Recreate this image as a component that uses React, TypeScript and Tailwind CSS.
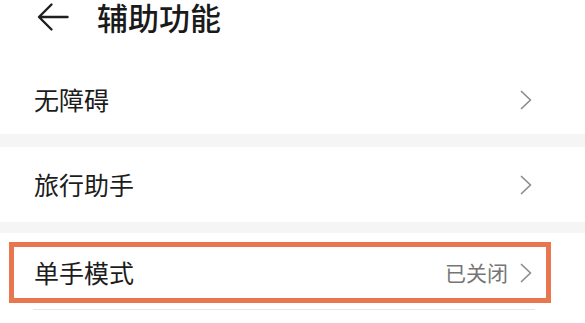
import React from 'react';

const font = { fontFamily: '"Noto Sans CJK SC", "Noto Sans", sans-serif' };

function Chevron() {
  return (
    <svg width="12" height="20" viewBox="0 0 12 20" fill="none" className="shrink-0">
      <path d="M1.5 1.5 L10.5 10 L1.5 18.5" stroke="#8c8c8c" strokeWidth="1.7" strokeLinecap="round" strokeLinejoin="round" />
    </svg>
  );
}

function BackArrow() {
  return (
    <svg width="32" height="30" viewBox="0 0 32 30" fill="none">
      <path d="M30.5 15 H2.5 M14.5 2.5 L2 15 L14.5 27.5" stroke="#1f1f1f" strokeWidth="2.4" strokeLinecap="round" strokeLinejoin="round" />
    </svg>
  );
}

function Row({ label, value, height }: { label: string; value?: string; height: string }) {
  return (
    <div className={`flex items-center justify-between pl-[34px] pr-[53px] ${height}`}>
      <span className="text-[25px] leading-none text-[#1c1c1c]">{label}</span>
      <div className="flex items-center gap-[12px]">
        {value && <span className="text-[21px] leading-none text-[#757575]">{value}</span>}
        <Chevron />
      </div>
    </div>
  );
}

export default function App() {
  return (
    <div className="w-[585px] h-[323px] overflow-hidden bg-white" style={font}>
      {/* Header */}
      <div className="flex items-start h-[65px] pt-[2px] pl-[37px]">
        <BackArrow />
        <span className="ml-[28px] text-[31px] leading-[34px] -mt-[2px] font-medium text-[#1a1a1a]">
          辅助功能
        </span>
      </div>

      <Row label="无障碍" height="h-[69px]" />
      <div className="h-[13px] bg-[#f5f5f5]" />

      <Row label="旅行助手" height="h-[75px]" />
      <div className="h-[11px] bg-[#f5f5f5]" />

      <div className="relative h-[90px] pt-[9px]">
        <Row label="单手模式" value="已关闭" height="h-[61px]" />
        <div className="mt-[6px] ml-[33px] mr-[50px] h-px bg-[#e6e6e6]" />
        <div className="absolute left-[9px] top-[9px] w-[542px] h-[61px] border-[5px] border-[#e8774f]" />
      </div>
    </div>
  );
}
